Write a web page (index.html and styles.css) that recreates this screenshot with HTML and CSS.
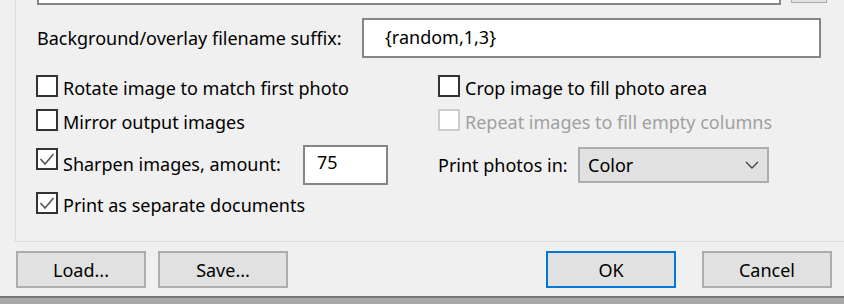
FILE: index.html
```html
<!DOCTYPE html>
<html lang="en">
<head>
    <meta charset="UTF-8">
    <meta name="viewport" content="width=device-width, initial-scale=1.0">
    <title>Print Options</title>
    <link rel="stylesheet" href="styles.css">
</head>
<body>

    <div class="group">
        <div class="path-row">
            <div class="path-field"></div>
            <div class="browse"></div>
        </div>

        <div class="suffix-row">
            <label class="suffix-label">Background/overlay filename suffix:</label>
            <div class="text-field suffix-field">{random,1,3}</div>
        </div>

        <div class="opt-row first">
            <div class="check"><span class="box"></span><span class="text">Rotate image to match first photo</span></div>
            <div class="check"><span class="box"></span><span class="text">Crop image to fill photo area</span></div>
        </div>
        <div class="opt-row">
            <div class="check"><span class="box"></span><span class="text">Mirror output images</span></div>
            <div class="check disabled"><span class="box"></span><span class="text">Repeat images to fill empty columns</span></div>
        </div>
        <div class="opt-row tall">
            <div class="inline">
                <div class="check amount-check"><span class="box checked"><svg viewBox="0 0 18 18"><polyline points="2.5,9 7,14 15.5,4"/></svg></span><span class="text">Sharpen images, amount:</span></div>
                <div class="text-field amount-field">75</div>
            </div>
            <div class="inline">
                <span class="select-label">Print photos in:</span>
                <div class="select">
                    <span>Color</span>
                    <svg class="chevron" viewBox="0 0 14 8"><polyline points="1,1 7,7 13,1"/></svg>
                </div>
            </div>
        </div>
        <div class="opt-row last">
            <div class="check"><span class="box checked"><svg viewBox="0 0 18 18"><polyline points="2.5,9 7,14 15.5,4"/></svg></span><span class="text">Print as separate documents</span></div>
        </div>
    </div>

    <div class="buttons">
        <button class="btn">Load...</button>
        <button class="btn">Save...</button>
        <button class="btn default">OK</button>
        <button class="btn">Cancel</button>
    </div>

    <div class="frame-edge"></div>

</body>
</html>
```

FILE: styles.css
```css
body {
    margin: 0;
    background-color: #f0f0f0;
    font-family: "Noto Sans", "Open Sans", sans-serif;
    font-size: 18px;
    color: #000;
    overflow: hidden;
    width: 844px;
    height: 304px;
}
.group {
    margin-left: 15px;
    border-left: 1px solid #dcdcdc;
    border-bottom: 1px solid #dcdcdc;
    padding-left: 20px;
    padding-bottom: 27px;
}
.path-row {
    display: flex;
    height: 4px;
}
.path-field {
    width: 740px;
    margin-left: 1px;
    height: 3px;
    background-color: #fff;
    border: 2px solid #858585;
    border-top: none;
}
.browse {
    width: 34px;
    height: 2px;
    margin-left: 10px;
    background-color: #e1e1e1;
    border: 1px solid #adadad;
    border-top: none;
}
.suffix-row {
    display: flex;
    align-items: center;
    height: 40px;
    margin-top: 14px;
}
.suffix-label {
    width: 325px;
    margin-left: 1px;
}
.text-field {
    box-sizing: border-box;
    height: 40px;
    background-color: #fff;
    border: 2px solid #858585;
    display: flex;
    align-items: center;
}
.suffix-field {
    width: 459px;
    padding-left: 21px;
    padding-bottom: 2px;
}
.opt-row {
    display: grid;
    grid-template-columns: 402px auto;
    align-items: center;
    height: 22px;
    margin-top: 12px;
}
.opt-row.first {
    margin-top: 17px;
}
.opt-row.tall {
    height: 40px;
    margin-top: 14px;
}
.opt-row.last {
    margin-top: 7px;
}
.check {
    display: flex;
    align-items: center;
    height: 22px;
}
.box {
    box-sizing: border-box;
    width: 22px;
    height: 22px;
    margin-right: 5px;
    background-color: #fff;
    border: 2px solid #333;
    display: flex;
    align-items: center;
    justify-content: center;
}
.box svg {
    width: 18px;
    height: 18px;
    fill: none;
    stroke: #555;
    stroke-width: 1.6;
}
.text {
    padding-top: 3px;
}
.check.disabled .box {
    border-color: #cccccc;
}
.check.disabled .text {
    color: #a0a0a0;
}
.inline {
    display: flex;
    align-items: center;
    height: 40px;
}
.amount-check {
    width: 267px;
    align-self: flex-start;
    margin-top: 3px;
}
.amount-check .text {
    padding-top: 9px;
}
.amount-field {
    width: 85px;
    padding-left: 12px;
    padding-bottom: 6px;
}
.select-label {
    width: 140px;
}
.select {
    box-sizing: border-box;
    width: 191px;
    height: 36px;
    background-color: #e1e1e1;
    border: 2px solid #adadad;
    display: flex;
    align-items: center;
    justify-content: space-between;
    padding: 0 8px;
}
.chevron {
    width: 14px;
    height: 8px;
    fill: none;
    stroke: #444;
    stroke-width: 1.4;
}
.buttons {
    display: flex;
    gap: 12px;
    padding-left: 16px;
    margin-top: 9px;
}
.btn {
    box-sizing: border-box;
    width: 130px;
    height: 37px;
    font-family: "Noto Sans", "Open Sans", sans-serif;
    font-size: 18px;
    color: #000;
    background-color: #e1e1e1;
    border: 2px solid #adadad;
    padding: 0;
}
.btn.default {
    margin-left: 246px;
    margin-right: 14px;
    border-color: #0078d7;
}
.frame-edge {
    margin-top: 8px;
    height: 6px;
    border-top: 2px solid #777;
    background-color: #a8a8a8;
}
```
